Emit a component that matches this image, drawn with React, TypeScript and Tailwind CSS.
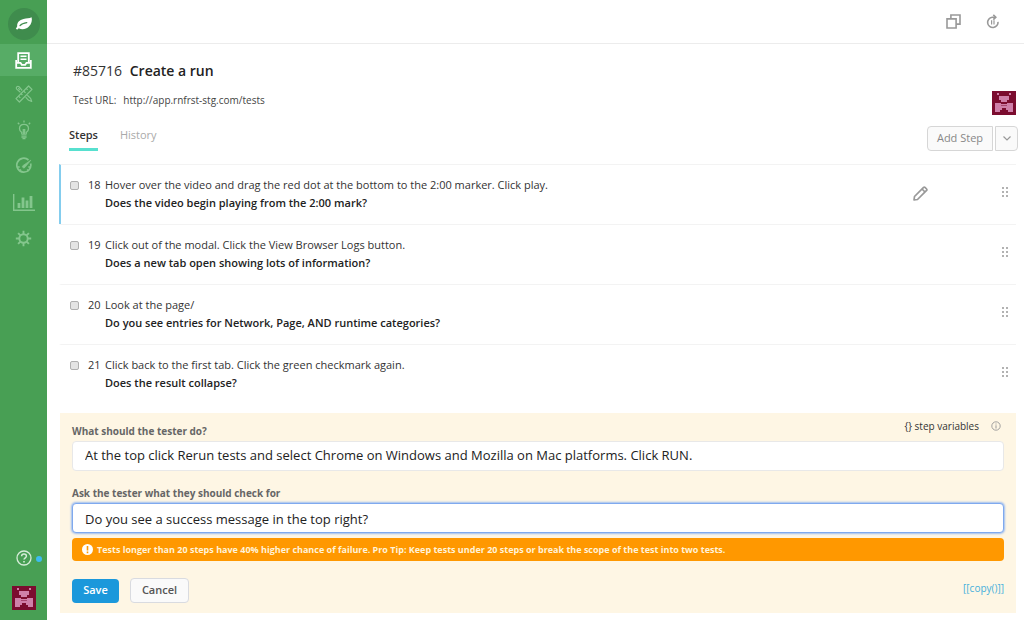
import React, { FC, ReactNode, useState } from "react";

type Step = { id: number; action: string; question: string };

const steps: Step[] = [
  {
    id: 18,
    action:
      "Hover over the video and drag the red dot at the bottom to the 2:00 marker. Click play.",
    question: "Does the video begin playing from the 2:00 mark?",
  },
  {
    id: 19,
    action: "Click out of the modal. Click the View Browser Logs button.",
    question: "Does a new tab open showing lots of information?",
  },
  {
    id: 20,
    action: "Look at the page/",
    question: "Do you see entries for Network, Page, AND runtime categories?",
  },
  {
    id: 21,
    action: "Click back to the first tab. Click the green checkmark again.",
    question: "Does the result collapse?",
  },
];

const LeafIcon = () => (
  <svg width="18" height="16" viewBox="0 0 18 16" fill="none">
    <path
      d="M16.6 1.200C14.500 2.700 11.500 2.100 8.500 3C4.500 4.100 1.800 6.500 2.200 10.200L.8 12.900L2.600 13.600L3.700 12.200C7 14 11.200 13.200 13.900 10.500C16.600 7.800 17.400 4.500 16.600 1.200Z"
      fill="#fff"
    />
    <path d="M5 9.600C6.500 7.800 8.800 7 11.800 6.600" stroke="#3f8c4d" strokeWidth="1.2" strokeLinecap="round" />
  </svg>
);

const InboxIcon = () => (
  <svg width="17" height="17" viewBox="0 0 17 17" fill="none" stroke="#fff">
    <path d="M3.200 11V1.200H13.800V11" strokeWidth="1.800" />
    <path d="M5.500 4.200H11.500M5.500 7.200H11.500" strokeWidth="1.600" />
    <path d="M1.200 8V15.800H15.800V8" strokeWidth="1.800" />
    <path d="M1.500 10.800H5.500L6.800 12.800H10.200L11.500 10.800H15.500" strokeWidth="1.800" />
  </svg>
);

const ToolsIcon = () => (
  <svg width="18" height="18" viewBox="0 0 18 18" fill="none" stroke="currentColor" strokeWidth="1.200" strokeLinejoin="round">
    <path d="M7.200 5.500L4 1.700Q2.900 .8 1.700 1.900Q.8 3 1.700 4.100L5.400 7.200M10.600 12.200L13.600 15.300L16.700 16.500L15.600 13.400L12.300 10.300" />
    <path d="M1 13.600L13.600 1L17 4.400L4.400 17Z" />
    <path d="M11.200 3.400L12.600 4.800M8.600 6L10.500 7.900M6 8.600L7.400 10M3.500 11.100L5.300 12.900M3.200 3.200L4.800 4.800" />
  </svg>
);

const BulbIcon = () => (
  <svg width="16" height="20" viewBox="0 0 16 20" fill="none" stroke="currentColor" strokeWidth="1.300">
    <path d="M5.800 14V12.500C4.400 11.600 3.500 10.300 3.500 8.700C3.500 6.100 5.400 4.300 8 4.300S12.500 6.100 12.500 8.700C12.500 10.300 11.600 11.600 10.200 12.500V14" />
    <path d="M5.400 14.900H10.600M5.400 17H10.600M6.500 18.700H9.500M7.300 14V9M8.700 14V9" />
    <path d="M8 .5V2.600M1.800 2.700L3.300 4.200M14.200 2.700L12.700 4.200" />
  </svg>
);

const GaugeIcon = () => (
  <svg width="18" height="18" viewBox="0 0 18 18" fill="none" stroke="currentColor">
    <path d="M13.500 3A7 7 0 1 0 15.600 6.500" strokeWidth="1.700" />
    <path d="M15.800 3.200L9.800 10.500A1.300 1.300 0 0 1 7.800 8.700Z" fill="currentColor" strokeWidth=".7" />
    <path d="M2.500 10H4.700M13.300 10H15.500M4.200 14L6 12.500M13.800 14L12 12.500" strokeWidth="1.300" />
  </svg>
);

const ChartIcon = () => (
  <svg width="22" height="17" viewBox="0 0 22 17" fill="none" stroke="currentColor">
    <path d="M.7 0V16.200H22" strokeWidth="1.400" />
    <path d="M6 9V14M10 3.500V14M14 6.500V14M18 2V14" strokeWidth="2.800" />
  </svg>
);

const GearIcon = () => (
  <svg width="17" height="17" viewBox="0 0 17 17" fill="none" stroke="currentColor">
    <circle cx="8.500" cy="8.500" r="4.200" strokeWidth="1.900" />
    <path
      d="M8.500 .8V4M8.500 13V16.200M.8 8.500H4M13 8.500H16.200M3.100 3.100L5.400 5.400M11.600 11.600L13.900 13.900M3.100 13.900L5.400 11.600M11.600 5.400L13.900 3.100"
      strokeWidth="1.900"
    />
  </svg>
);

const HelpIcon = () => (
  <svg width="16" height="16" viewBox="0 0 16 16" fill="none" stroke="currentColor">
    <circle cx="8" cy="8" r="7" strokeWidth="1.300" />
    <path d="M5.600 6.300C5.600 4.900 6.600 4.100 8 4.100S10.400 4.900 10.400 6.200C10.400 7.700 8 7.900 8 9.600" strokeWidth="1.500" />
    <path d="M8 10.900V12.400" strokeWidth="1.600" />
  </svg>
);

const CopyIcon = () => (
  <svg width="15" height="15" viewBox="0 0 15 15" fill="none" stroke="#999" strokeWidth="1.600">
    <path d="M1 4.900H10.100V14H1Z" />
    <path d="M4.900 4.900V1H14V10.100H10.100" />
  </svg>
);

const RerunIcon = () => (
  <svg width="14" height="15" viewBox="0 0 14 15" fill="none" stroke="#999">
    <path d="M9.500 3.200H6.200A5.200 5.200 0 1 0 12 7.800" strokeWidth="1.600" />
    <path d="M7.300 .8L9.800 3.200L7.300 5.600" strokeWidth="1.600" />
    <path d="M5.600 6.300V10.500M8 6.300V10.500" strokeWidth="1.200" />
  </svg>
);

const PencilIcon = () => (
  <svg width="15" height="15" viewBox="0 0 15 15" fill="none" stroke="#999" strokeWidth="1.700" strokeLinejoin="round">
    <path d="M1 14L1.500 10.500L10.600 1.400Q11.300 .8 12 1.400L13.600 3Q14.200 3.700 13.600 4.400L4.500 13.500Z" />
    <path d="M9 3L12 6" />
  </svg>
);

const DragIcon = () => (
  <svg width="6" height="10" viewBox="0 0 6 10" fill="#999">
    <circle cx="1" cy="1" r="1" />
    <circle cx="5" cy="1" r="1" />
    <circle cx="1" cy="5" r="1" />
    <circle cx="5" cy="5" r="1" />
    <circle cx="1" cy="9" r="1" />
    <circle cx="5" cy="9" r="1" />
  </svg>
);

const Avatar = () => (
  <svg width="24" height="24" viewBox="0 0 24 24">
    <path fill="#7b0c2f" d="M0 0H24V24H0Z" />
    <path
      fill="#cf7fa9"
      d="M5 2H7V4H5ZM17 2H19V4H17ZM7 5H17V9H15V11H9V9H7ZM3 12H9V13H15V12H21V21H16V19H14V17H10V19H8V21H3Z"
    />
    <path fill="#a8466f" d="M9 14H15V15H9Z" />
  </svg>
);

const NavItem: FC<{ label: string; children: ReactNode }> = ({ label, children }) => (
  <a href="#" aria-label={label} className="flex items-center justify-center h-9">
    {children}
  </a>
);

const Sidebar = () => (
  <nav className="flex flex-col w-[47px] shrink-0 bg-[#489f54] text-[#84c68d]">
    <a href="#" aria-label="Home" className="flex items-center justify-center h-11 pt-1">
      <span className="flex items-center justify-center w-8 h-8 rounded-full bg-[#3f8c4d]">
        <LeafIcon />
      </span>
    </a>
    <a href="#" aria-label="Tests" className="flex items-center justify-center h-8 bg-[#57ac66]">
      <InboxIcon />
    </a>
    <NavItem label="Builder">
      <ToolsIcon />
    </NavItem>
    <NavItem label="Ideas">
      <BulbIcon />
    </NavItem>
    <NavItem label="Runs">
      <GaugeIcon />
    </NavItem>
    <NavItem label="Reports">
      <ChartIcon />
    </NavItem>
    <NavItem label="Settings">
      <GearIcon />
    </NavItem>
    <div className="flex flex-col items-center gap-5 mt-auto pb-2.5">
      <a href="#" aria-label="Help" className="relative text-[#d5ecd8]">
        <HelpIcon />
        <span className="absolute w-1.5 h-1.5 rounded-full -right-2.5 top-1.5 bg-[#3dbcf0]"></span>
      </a>
      <a href="#" aria-label="Account">
        <Avatar />
      </a>
    </div>
  </nav>
);

const StepRow: FC<{ step: Step; active: boolean }> = ({ step, active }) => {
  const [checked, setChecked] = useState(false);
  return (
    <li
      className={
        active
          ? "flex items-start h-[60px] pt-[11px] border-t border-t-[#f3f3f3] border-l-2 border-l-[#84cdee]"
          : "flex items-start h-[60px] pt-[11px] border-t border-t-[#f3f3f3] border-l-2 border-l-transparent"
      }
    >
      <input
        type="checkbox"
        id={`step-${step.id}`}
        checked={checked}
        onChange={(e) => setChecked(e.target.checked)}
        className="appearance-none w-[9px] h-[9px] mt-[5px] ml-[9px] rounded-[2px] border border-[#b0b0b0] bg-[#e4e4e4] checked:bg-[#1b98db]"
      />
      <label htmlFor={`step-${step.id}`} className="flex flex-1 ml-[9px] text-[11px] leading-[18px] text-[#333]">
        <span className="w-[17px] shrink-0">{step.id}</span>
        <span>
          {step.action}
          <b className="block font-semibold text-[#222]">{step.question}</b>
        </span>
      </label>
      {active && (
        <button aria-label="Edit step" className="mt-2.5 mr-[74px]">
          <PencilIcon />
        </button>
      )}
      <button aria-label="Move step" className="mt-[11px] mr-2">
        <DragIcon />
      </button>
    </li>
  );
};

const EditForm = () => {
  const [action, setAction] = useState(
    "At the top click Rerun tests and select Chrome on Windows and Mozilla on Mac platforms. Click RUN."
  );
  const [check, setCheck] = useState("Do you see a success message in the top right?");
  return (
    <form onSubmit={(e) => e.preventDefault()} className="px-3 pt-2 pb-2.5 mt-[9px] ml-px bg-[#fef6e4]">
      <div className="flex items-start justify-between">
        <label htmlFor="action" className="pt-0.5 text-[10px] leading-4 font-bold text-[#666]">
          What should the tester do?
        </label>
        <div className="flex items-start gap-3">
          <a href="#" className="text-[10px] leading-[10px] text-[#333]">
            {"{} step variables"}
          </a>
          <svg width="10" height="10" viewBox="0 0 10 10" fill="none" stroke="#999" className="mr-[3px]">
            <circle cx="5" cy="5" r="4.200" strokeWidth=".9" />
            <path d="M5 4.300V7.500M5 2.500V3.500" strokeWidth="1" />
          </svg>
        </div>
      </div>
      <input
        id="action"
        value={action}
        onChange={(e) => setAction(e.target.value)}
        className="block w-full h-[30px] px-3 mt-0.5 pb-0.5 text-[13px] text-[#222] bg-white border border-[#e8e8e8] rounded-sm outline-none"
      />
      <label htmlFor="check" className="block mt-[14px] text-[10px] leading-4 font-bold text-[#666]">
        Ask the tester what they should check for
      </label>
      <input
        id="check"
        value={check}
        onChange={(e) => setCheck(e.target.value)}
        className="block w-full h-[30px] px-3 mt-0.5 pt-0.5 text-[13px] text-[#222] bg-white border border-[#7fa9ee] rounded-sm shadow-[0_0_2px_1px_#9dbdf0] outline-none"
      />
      <p className="flex items-center gap-1 h-[23px] px-2.5 mt-[5px] text-[9px] font-bold text-[#fff3d9] bg-[#ff9800] rounded-sm">
        <svg width="11" height="11" viewBox="0 0 11 11">
          <circle cx="5.500" cy="5.500" r="5.500" fill="#fff" />
          <path d="M5.500 2V6.500M5.500 7.600V9.200" stroke="#ff9800" strokeWidth="1.600" />
        </svg>
        Tests longer than 20 steps have 40% higher chance of failure. Pro Tip: Keep tests under 20 steps or
        break the scope of the test into two tests.
      </p>
      <div className="flex items-center mt-[17px] text-[11px] font-semibold">
        <button type="submit" className="w-[47px] h-6 text-white bg-[#1b98db] rounded-sm">
          Save
        </button>
        <button type="button" className="w-[59px] h-[25px] ml-[11px] text-[#555] bg-[#fafafa] border border-[#d9dbe0] rounded-sm">
          Cancel
        </button>
        <a href="#" className="ml-auto mb-1 text-[10px] font-normal text-[#45b0dc]">
          [[copy()]]
        </a>
      </div>
    </form>
  );
};

const App = () => {
  return (
    <div className="flex min-h-screen bg-white font-['Open_Sans',sans-serif]">
      <Sidebar />
      <div className="flex-1 min-w-0">
        <header className="flex items-center justify-end h-11 gap-[25px] pr-6 border-b border-[#ececec]">
          <button aria-label="Duplicate">
            <CopyIcon />
          </button>
          <button aria-label="Rerun">
            <RerunIcon />
          </button>
        </header>
        <main className="pl-3 pr-2">
          <div className="flex items-end justify-between pl-[14px] pt-[17px]">
            <div>
              <h1 className="text-[14px] leading-5 text-[#333]">
                #85716 <span className="ml-1 font-semibold text-[#222]">Create a run</span>
              </h1>
              <p className="mt-[11px] text-[10px] leading-4 text-[#444]">
                Test URL:
                <a href="#" className="ml-[7px]">
                  http://app.rnfrst-stg.com/tests
                </a>
              </p>
            </div>
            <div className="-mb-[7px]">
              <Avatar />
            </div>
          </div>
          <div className="flex items-start justify-between h-14 pt-[18px] pl-2.5 -mr-0.5">
            <div className="flex items-start gap-[22px] text-[11px] leading-[18px]">
              <a href="#" className="pb-1 font-semibold text-[#333] border-b-[3px] border-[#57e0cf]">
                Steps
              </a>
              <a href="#" className="text-[#aaa]">
                History
              </a>
            </div>
            <div className="flex gap-0.5">
              <button className="w-[66px] h-[25px] text-[11px] font-medium text-[#888] bg-[#fafafa] border border-[#d6d6d6] rounded-l-sm">
                Add Step
              </button>
              <button
                aria-label="More step options"
                className="flex items-center justify-center w-[23px] h-[25px] bg-[#fafafa] border border-[#d6d6d6] rounded-r-sm"
              >
                <svg width="8" height="5" viewBox="0 0 8 5" fill="none" stroke="#999" strokeWidth="1.200">
                  <path d="M.5 .5L4 4L7.500 .5" />
                </svg>
              </button>
            </div>
          </div>
          <ul>
            {steps.map((step) => (
              <StepRow key={step.id} step={step} active={step.id === 18} />
            ))}
          </ul>
          <EditForm />
        </main>
      </div>
    </div>
  );
};

export default App;
